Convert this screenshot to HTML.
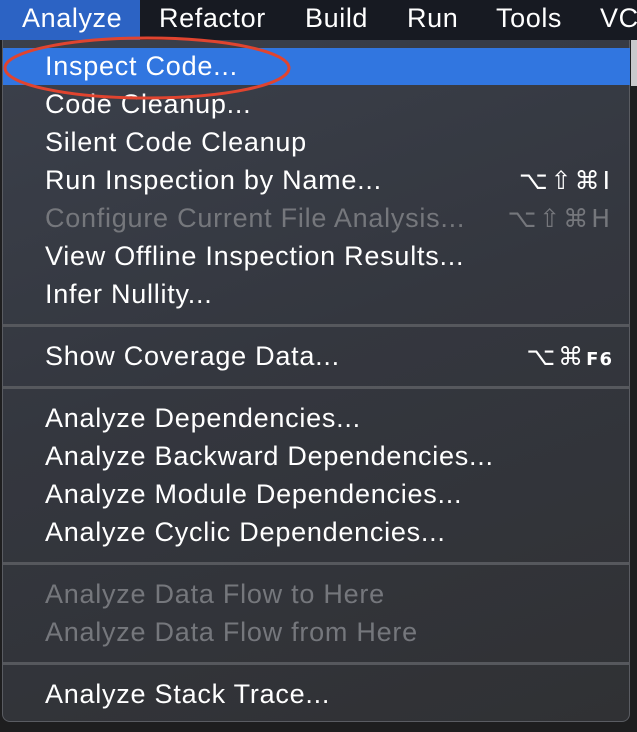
<!DOCTYPE html>
<html><head><meta charset="utf-8"><style>
*{margin:0;padding:0;box-sizing:border-box}
body{width:637px;height:732px;background:#1e1e1f;position:relative;overflow:hidden;font-family:"Liberation Sans","DejaVu Sans",sans-serif;color:#fff}
.bar{position:absolute;left:0;top:0;width:637px;height:40px;background:#171a22}
.bar span{position:absolute;top:3px;font-size:27px;letter-spacing:0.6px;color:#fff}
.hl{position:absolute;left:0;top:0;width:140px;height:40px;background:#2c63c4}
.side{position:absolute;left:631px;top:40px;width:6px;height:46px;background:#c9c9cb}
.menu{position:absolute;left:2px;top:40px;width:628px;height:682px;border:1px solid #5a5c62;border-top:none;border-radius:0 0 8px 8px;background:linear-gradient(160deg,#3b404b 0%,#34373f 45%,#303134 100%)}
.row{position:absolute;left:42px;font-size:27px;letter-spacing:0.75px;line-height:38px;height:38px;white-space:nowrap;margin-top:-1px}
.dis{color:#75777c}
.sc{position:absolute;right:16px;font-size:25px;letter-spacing:3px;line-height:38px;height:38px;font-family:"DejaVu Sans",sans-serif}
.sel{position:absolute;left:0;top:8px;width:627px;height:37px;background:#3176e0}
.sep{position:absolute;left:0;width:627px;height:3px;background:#56585d}
</style></head><body>
<div class="bar"><div class="hl"></div>
<span style="left:22px">Analyze</span><span style="left:159px">Refactor</span><span style="left:305px">Build</span><span style="left:407px">Run</span><span style="left:496px">Tools</span><span style="left:600px">VC</span></div>
<div class="side"></div>
<div class="menu">
<div class="sel"></div>
<div class="row" style="top:8px">Inspect Code...</div>
<div class="row" style="top:46px">Code Cleanup...</div>
<div class="row" style="top:84px">Silent Code Cleanup</div>
<div class="row" style="top:122px">Run Inspection by Name...</div><div class="sc" style="top:122px">⌥⇧⌘I</div>
<div class="row dis" style="top:160px">Configure Current File Analysis...</div><div class="sc dis" style="top:160px">⌥⇧⌘H</div>
<div class="row" style="top:198px">View Offline Inspection Results...</div>
<div class="row" style="top:236px">Infer Nullity...</div>
<div class="sep" style="top:284px"></div>
<div class="row" style="top:298px">Show Coverage Data...</div><div class="sc" style="top:298px">⌥⌘<span style="font-size:18px;letter-spacing:1px;font-weight:bold">F6</span></div>
<div class="sep" style="top:346px"></div>
<div class="row" style="top:360px">Analyze Dependencies...</div>
<div class="row" style="top:398px">Analyze Backward Dependencies...</div>
<div class="row" style="top:436px">Analyze Module Dependencies...</div>
<div class="row" style="top:474px">Analyze Cyclic Dependencies...</div>
<div class="sep" style="top:522px"></div>
<div class="row dis" style="top:536px">Analyze Data Flow to Here</div>
<div class="row dis" style="top:574px">Analyze Data Flow from Here</div>
<div class="sep" style="top:622px"></div>
<div class="row" style="top:636px">Analyze Stack Trace...</div>
</div>
<svg style="position:absolute;left:0;top:0" width="637" height="732"><ellipse cx="147" cy="68" rx="142" ry="30" fill="none" stroke="#e0442f" stroke-width="3"/></svg>
</body></html>
